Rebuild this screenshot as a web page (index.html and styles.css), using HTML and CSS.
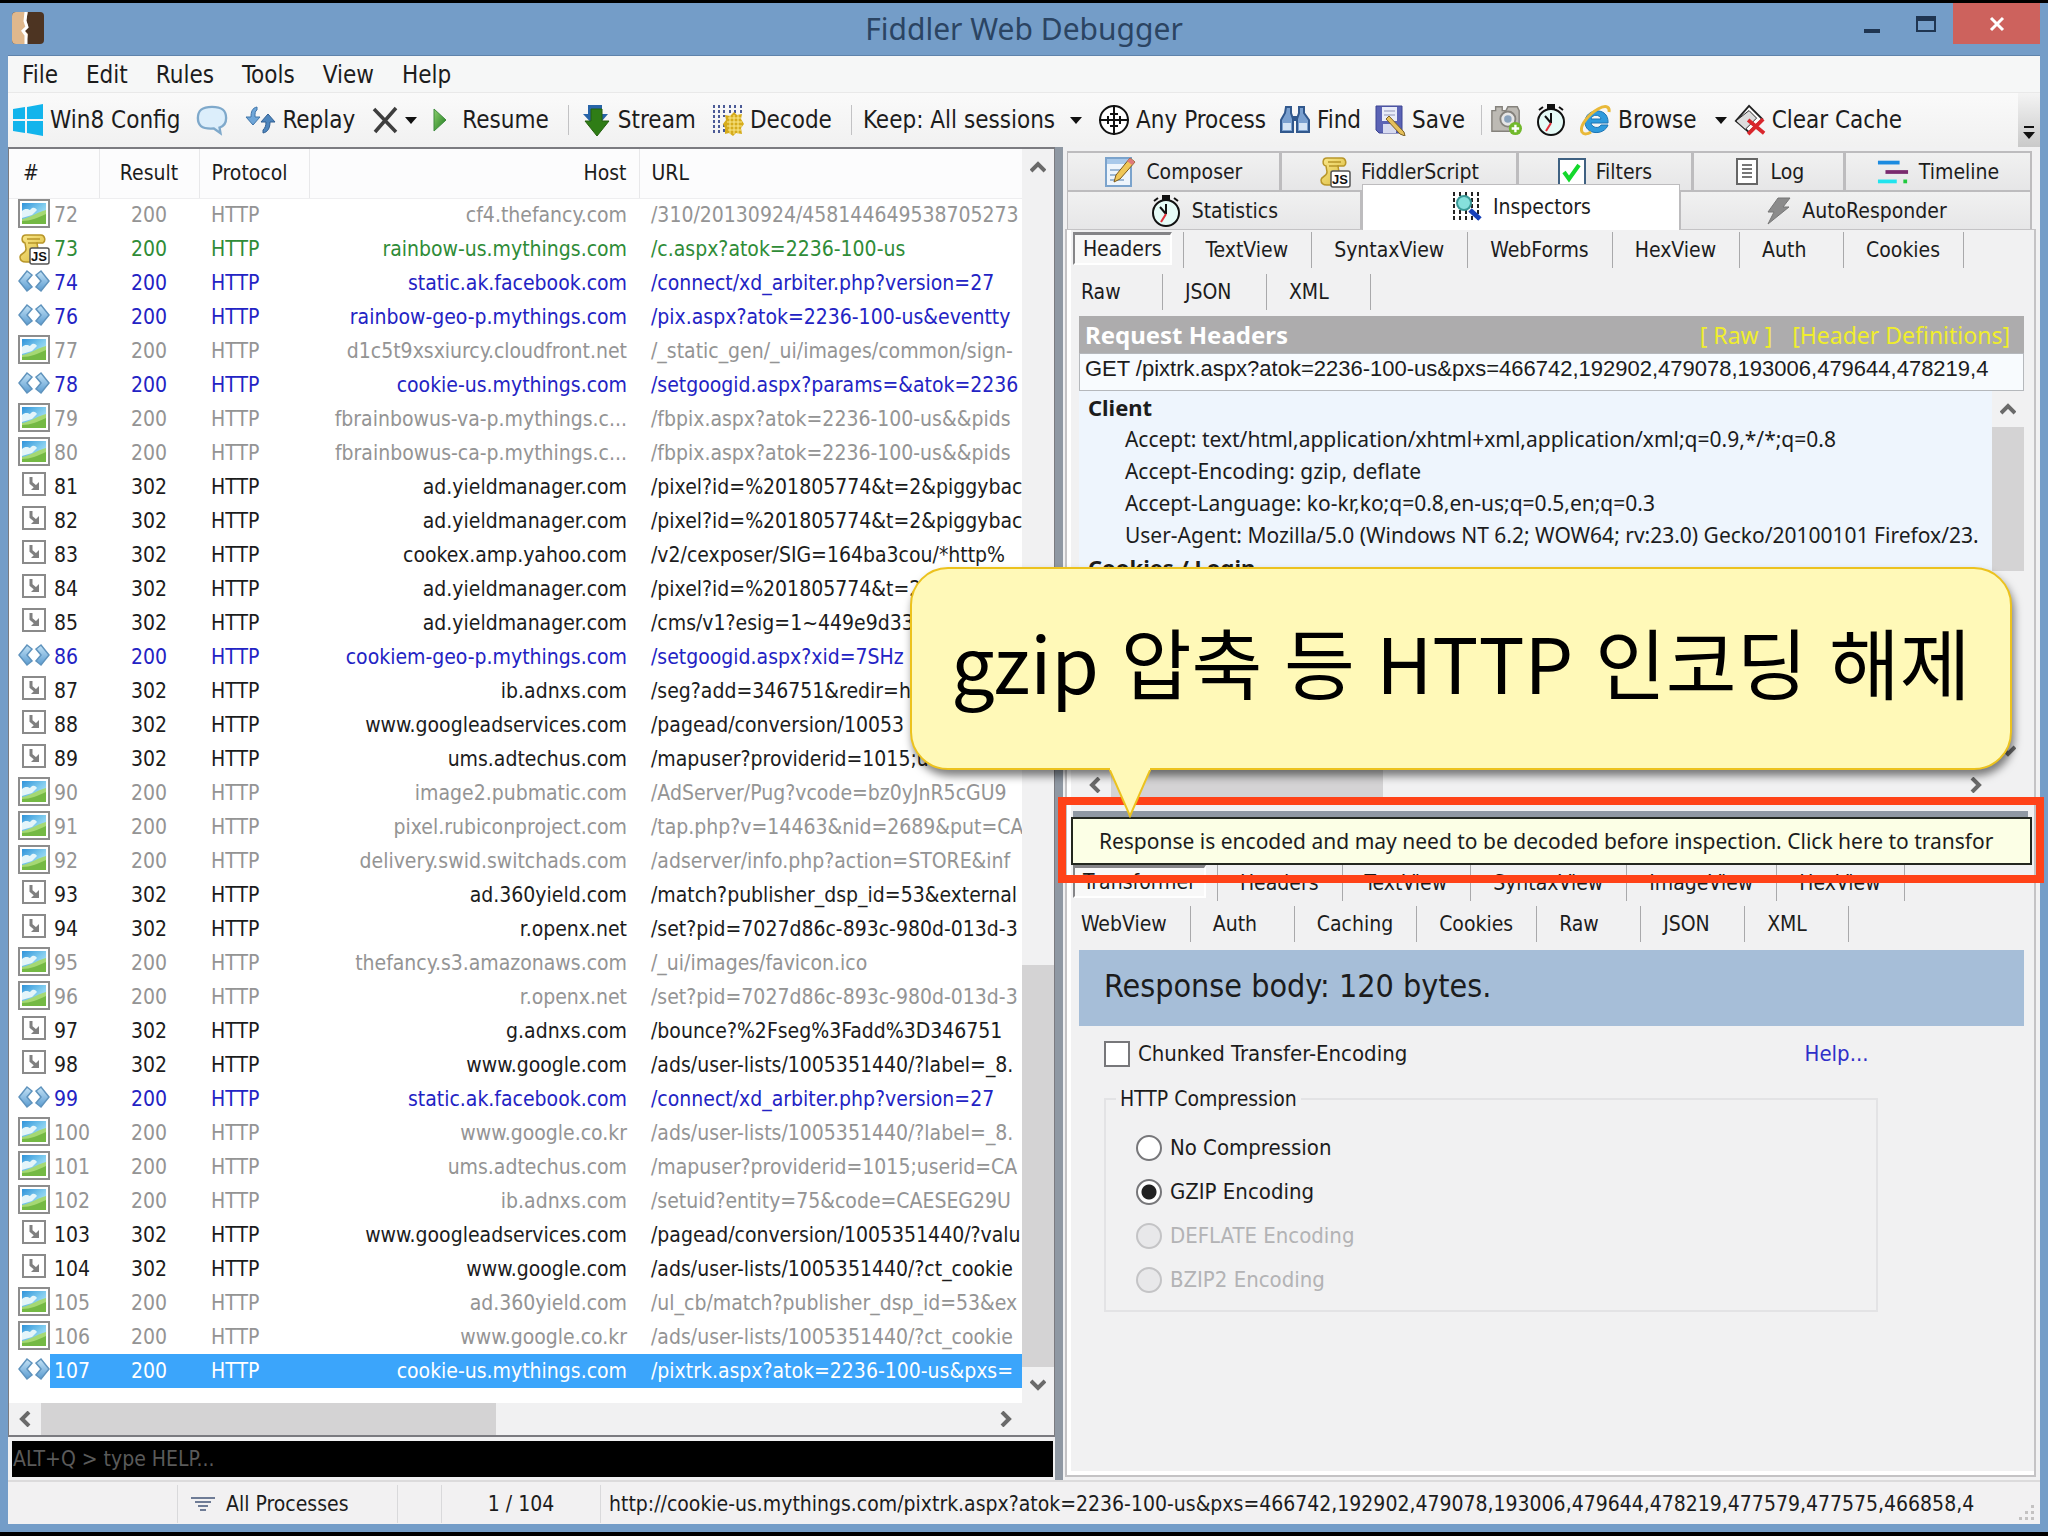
FILE: index.html
```html
<!DOCTYPE html>
<html lang="ko">
<head>
    <meta charset="UTF-8">
    <meta name="viewport" content="width=device-width, initial-scale=1.0">
    <title>Fiddler Web Debugger</title>
    <link rel="stylesheet" href="styles.css">
</head>
<body>
    <!-- Icon sprite -->
    <svg class="sprite" aria-hidden="true">
        <defs>
            <linearGradient id="sky" x1="0" y1="0" x2="1" y2="1">
                <stop offset="0" stop-color="#2f93da"/><stop offset=".5" stop-color="#7fcbee"/><stop offset="1" stop-color="#d2f0f5"/>
            </linearGradient>
            <linearGradient id="ice" x1="0" y1="0" x2="0" y2="1">
                <stop offset="0" stop-color="#c5e3f6"/><stop offset="1" stop-color="#5a9bd0"/>
            </linearGradient>
            <linearGradient id="leaf" x1="0" y1="0" x2="1" y2="1">
                <stop offset="0" stop-color="#8ccf6d"/><stop offset="1" stop-color="#1d7a1d"/>
            </linearGradient>
            <linearGradient id="paper" x1="0" y1="0" x2="1" y2="1">
                <stop offset="0" stop-color="#fbe98c"/><stop offset="1" stop-color="#d9b93c"/>
            </linearGradient>
        </defs>
        <symbol id="i-img" viewBox="0 0 32 32">
            <rect x="1" y="1" width="30" height="27" fill="#fff" stroke="#8d8d8d" stroke-width="2"/>
            <rect x="4" y="4" width="24" height="21" fill="url(#sky)"/>
            <path d="M4 12c3-3 6-2 8-1 3-4 6-2 7 0l-5 5-10 3z" fill="#e4f5fa"/>
            <path d="M4 20c8-1 13-6 24-9v14H4z" fill="#a5d873"/>
            <path d="M4 22c9 0 15-3 24-7v10H4z" fill="#74b944"/>
        </symbol>
        <symbol id="i-js" viewBox="0 0 32 32">
            <path d="M8 2C3 2 3 9 7 10l1 6c0 5-6 4-6 8 0 4 3 5 6 5h10l3-7-2-12h6c3-2 2-8-2-8z" fill="url(#paper)" stroke="#b8962a" stroke-width="1.5"/>
            <path d="M9 6h13M10 10h10" stroke="#b8962a" stroke-width="1.5"/>
            <rect x="12" y="15" width="19" height="16" rx="2" fill="#fff" stroke="#555" stroke-width="1.5"/>
        </symbol>
        <symbol id="i-xml" viewBox="0 0 32 32">
            <path d="M9 4l5 4-5 6 5 6-5 4-8-10z" fill="url(#ice)" stroke="#5f93bd" stroke-width="1.5"/>
            <path d="M23 4l-5 4 5 6-5 6 5 4 8-10z" fill="url(#ice)" stroke="#5f93bd" stroke-width="1.5"/>
        </symbol>
        <symbol id="i-redir" viewBox="0 0 32 32">
            <rect x="5" y="2" width="22" height="22" fill="#fff" stroke="#8a8a8a" stroke-width="2"/>
            <path d="M13 6v6l6 5" fill="none" stroke="#808080" stroke-width="3"/>
            <path d="M21 11v8h-8z" fill="#808080"/>
        </symbol>
        <symbol id="i-fiddler" viewBox="0 0 32 32">
            <rect width="32" height="32" rx="4" fill="#4d3422"/>
            <path d="M4 0h12l-2 8 2 6-4 4 4 4-2 10H4c-3 0-4-2-4-4V4c0-3 2-4 4-4z" fill="#e0b88d"/>
            <path d="M14 0l-1 9 2 6-4 4 3 4v9" fill="none" stroke="#fff" stroke-width="3"/>
        </symbol>
        <symbol id="i-win" viewBox="0 0 32 32">
            <path d="M1 5l12-2v12H1zM15 3l16-3v15H15zM1 17h12v12L1 27zM15 17h16v15l-16-3z" fill="#12b4ec"/>
        </symbol>
        <symbol id="i-chat" viewBox="0 0 34 32">
            <path d="M17 2c12 0 15 5 15 12 0 6-3 9-7 10l1 6-7-5c-14 1-17-4-17-11C2 6 6 2 17 2z" fill="#dceefb" stroke="#7fa9cb" stroke-width="2.5"/>
        </symbol>
        <symbol id="i-replay" viewBox="0 0 32 32">
            <path d="M13 3C8 4 7 8 7 13H2l7 8 7-8h-5c0-4 0-6 2-7z" fill="#6fa6d8" stroke="#3f74a8"/>
            <path d="M19 29c5-1 7-5 7-11h5l-7-8-7 8h5c0 4-1 6-3 8z" fill="#4f86bd" stroke="#305f92"/>
        </symbol>
        <symbol id="i-cross" viewBox="0 0 28 28">
            <path d="M3 3l22 23M25 2L4 26" fill="none" stroke="#3e3e3e" stroke-width="3.5"/>
        </symbol>
        <symbol id="i-play" viewBox="0 0 14 24">
            <path d="M1 1l12 11L1 23z" fill="url(#leaf)" stroke="#3d8b3d"/>
        </symbol>
        <symbol id="i-stream" viewBox="0 0 28 32">
            <path d="M6 1h14v9h6L14 24 1 10h5z" fill="#2764a8"/>
            <path d="M9 5h11v12h7L15 32 3 17h6z" fill="#2f7d16" stroke="#24600f"/>
        </symbol>
        <symbol id="i-decode" viewBox="0 0 32 32">
            <g fill="none" stroke="#4b5a96" stroke-width="2" stroke-dasharray="3 2">
                <path d="M2 1v30M7 1v30M12 1v12M18 1v8M23 1v8M29 1v8M12 20v10"/>
            </g>
            <path d="M22 8l3 3 5-1-1 5 3 5-3 4 1 6-6-1-3 3-4-3-4 1v-6l-2-4 3-4-1-5 5 1z" fill="#d6ac1c"/>
            <path d="M16 14h13M15 18h15M15 22h15M16 26h13M18 11v19M22 11v19M26 11v19" stroke="#fbe98c"/>
        </symbol>
        <symbol id="i-target" viewBox="0 0 32 32">
            <circle cx="16" cy="16" r="14" fill="#fff" stroke="#111" stroke-width="2"/>
            <path d="M16 1v30M1 16h30M10 12v8M22 12v8M12 10h8M12 22h8" stroke="#111" stroke-width="2"/>
        </symbol>
        <symbol id="i-find" viewBox="0 0 32 32">
            <path d="M7 3h5v6l2 6v13H2V16l4-7zM20 3h5v6l5 7v12H18V15l2-6z" fill="#7aa0cf" stroke="#31588d" stroke-width="2"/>
            <path d="M13 12h6v5h-6z" fill="#31588d"/>
            <path d="M4 19h8v7H4zM20 19h8v7h-8z" fill="#d4e4f5"/>
        </symbol>
        <symbol id="i-save" viewBox="0 0 32 32">
            <path d="M2 2h26v27H5l-3-3z" fill="#5b63b5" stroke="#3c4492"/>
            <rect x="8" y="3" width="15" height="14" fill="#e9ecf8"/>
            <path d="M10 7h11M10 11h11" stroke="#8e93b8"/>
            <rect x="9" y="20" width="13" height="9" fill="#d7daf0"/>
            <path d="M15 12l15 16 1 4-5-2-14-15z" fill="#e6c05a" stroke="#7b6024"/>
        </symbol>
        <symbol id="i-camera" viewBox="0 0 34 32">
            <path d="M2 6h4V2h7v4h4l2-4h10l2 4v22H2z" fill="#bdbab4" stroke="#85827c" stroke-width="1.5"/>
            <circle cx="19" cy="15" r="8" fill="#e6e6e6" stroke="#85827c" stroke-width="2"/>
            <circle cx="19" cy="15" r="4" fill="#8aa3bd"/>
            <circle cx="27" cy="25" r="7" fill="#72b92c"/>
            <path d="M27 21v8M23 25h8" stroke="#fff" stroke-width="2.5"/>
        </symbol>
        <symbol id="i-watch" viewBox="0 0 32 32">
            <path d="M13 1h6v4h-6zM4 6l4-3M28 6l-4-3" fill="#111" stroke="#111" stroke-width="2"/>
            <circle cx="16" cy="18" r="13" fill="#e6fbf7" stroke="#111" stroke-width="2"/>
            <path d="M16 19V9M16 19l-6-7" stroke="#111" stroke-width="2"/>
            <path d="M16 19l-5 8" stroke="#e0303a" stroke-width="2"/>
        </symbol>
        <symbol id="i-ie" viewBox="0 0 32 32">
            <path d="M28 19H11c1 5 8 6 10 2h7c-4 11-23 10-23-3 0-14 24-16 23 1zM11 15h10c-1-5-9-5-10 0z" fill="#2f9bdd" stroke="#1c74b4"/>
            <path d="M29 8c1-6-4-7-11-3C9 10-1 22 2 28c2 3 6 2 9 0" fill="none" stroke="#e9b93a" stroke-width="3"/>
        </symbol>
        <symbol id="i-eraser" viewBox="0 0 34 32">
            <path d="M16 1l14 14-14 14L2 17z" fill="#fff" stroke="#222" stroke-width="2"/>
            <path d="M2 17l14-11 8 8-12 12z" fill="#ddd" stroke="#222"/>
            <path d="M15 16l17 14M31 15L15 31" stroke="#d9262c" stroke-width="4"/>
        </symbol>
        <symbol id="i-compose" viewBox="0 0 32 32">
            <rect x="2" y="2" width="25" height="28" fill="#eef5fc" stroke="#7ba3cc" stroke-width="2"/>
            <path d="M3 3h23v5H3z" fill="#a9c9ea"/>
            <path d="M6 14h14M6 19h10M6 24h14" stroke="#9db8d4" stroke-width="2"/>
            <path d="M26 2l5 4-15 17-6 3 2-7z" fill="#f0c757" stroke="#7c5a1d"/>
            <path d="M26 2l5 4-3 3-5-4z" fill="#e07a7a"/>
        </symbol>
        <symbol id="i-check" viewBox="0 0 28 28">
            <rect x="1" y="1" width="26" height="26" fill="#fff" stroke="#3f6182" stroke-width="2"/>
            <path d="M6 14l5 7L21 7" fill="none" stroke="#14d82c" stroke-width="4"/>
        </symbol>
        <symbol id="i-log" viewBox="0 0 24 28">
            <rect x="2" y="1" width="20" height="25" fill="#fff" stroke="#666" stroke-width="2"/>
            <path d="M7 7h10M7 11h10M7 15h10M7 19h10" stroke="#777" stroke-width="2"/>
        </symbol>
        <symbol id="i-timeline" viewBox="0 0 34 28">
            <path d="M1 4h23" stroke="#1c8be0" stroke-width="4"/>
            <path d="M9 14h24" stroke="#7a2a6e" stroke-width="4"/>
            <path d="M1 24h20" stroke="#20e4ee" stroke-width="4"/>
            <path d="M28 24h4" stroke="#1ec83c" stroke-width="4"/>
        </symbol>
        <symbol id="i-inspect" viewBox="0 0 32 32">
            <g fill="none" stroke="#222" stroke-width="2" stroke-dasharray="4 2">
                <path d="M3 1v30M9 1v30M15 1v30M21 1v30M27 1v30"/>
            </g>
            <circle cx="13" cy="12" r="7" fill="#86e0dc" stroke="#3b9a98" stroke-width="2"/>
            <path d="M19 19l10 9" stroke="#1740b8" stroke-width="5"/>
        </symbol>
        <symbol id="i-bolt" viewBox="0 0 28 28">
            <path d="M14 1h12l-7 9h6L4 27l6-12H4z" fill="#8b8b8b" stroke="#777"/>
        </symbol>
        <symbol id="i-funnel" viewBox="0 0 26 16">
            <path d="M1 2h24M5 6h16M8 10h10M10 14h6" stroke="#6f7c96" stroke-width="2"/>
        </symbol>
        <symbol id="i-up" viewBox="0 0 16 12"><path d="M1 10l7-7 7 7" fill="none" stroke="#6a6a6a" stroke-width="4"/></symbol>
        <symbol id="i-down" viewBox="0 0 16 12"><path d="M1 2l7 7 7-7" fill="none" stroke="#6a6a6a" stroke-width="4"/></symbol>
        <symbol id="i-left" viewBox="0 0 12 16"><path d="M10 1L3 8l7 7" fill="none" stroke="#6a6a6a" stroke-width="4"/></symbol>
        <symbol id="i-right" viewBox="0 0 12 16"><path d="M2 1l7 7-7 7" fill="none" stroke="#6a6a6a" stroke-width="4"/></symbol>
    </svg>

    <div class="window">
        <header class="titlebar">
            <svg class="app-icon"><use href="#i-fiddler"/></svg>
            <h1 class="title">Fiddler Web Debugger</h1>
            <div class="window-buttons">
                <button class="win-btn" aria-label="Minimize"><span class="glyph-min"></span></button>
                <button class="win-btn" aria-label="Maximize"><span class="glyph-max"></span></button>
                <button class="win-btn win-close" aria-label="Close">
                    <svg width="16" height="16" viewBox="0 0 16 16"><path d="M2 2l12 12M14 2L2 14" stroke="#fff" stroke-width="3"/></svg>
                </button>
            </div>
        </header>

        <div class="client">
            <nav class="menubar">
                <button>File</button>
                <button>Edit</button>
                <button>Rules</button>
                <button>Tools</button>
                <button>View</button>
                <button>Help</button>
            </nav>

            <div class="toolbar">
                <button class="tool"><svg class="icon"><use href="#i-win"/></svg>Win8 Config</button>
                <button class="tool" aria-label="Comment"><svg class="icon"><use href="#i-chat"/></svg></button>
                <button class="tool"><svg class="icon"><use href="#i-replay"/></svg>Replay</button>
                <button class="tool" aria-label="Remove"><svg class="icon icon-s"><use href="#i-cross"/></svg><span class="caret"></span></button>
                <button class="tool tool-wide"><svg class="icon icon-play"><use href="#i-play"/></svg>Resume</button>
                <span class="sep"></span>
                <button class="tool"><svg class="icon"><use href="#i-stream"/></svg>Stream</button>
                <button class="tool"><svg class="icon"><use href="#i-decode"/></svg>Decode</button>
                <span class="sep"></span>
                <button class="tool tool-wide">Keep: All sessions<span class="caret"></span></button>
                <div class="tool-group">
                    <button class="tool"><svg class="icon"><use href="#i-target"/></svg>Any Process</button>
                    <button class="tool"><svg class="icon"><use href="#i-find"/></svg>Find</button>
                    <button class="tool"><svg class="icon"><use href="#i-save"/></svg>Save</button>
                    <span class="sep"></span>
                    <button class="tool" aria-label="Screenshot"><svg class="icon"><use href="#i-camera"/></svg></button>
                    <button class="tool" aria-label="Timer"><svg class="icon"><use href="#i-watch"/></svg></button>
                    <button class="tool tool-browse"><svg class="icon"><use href="#i-ie"/></svg>Browse<span class="caret"></span></button>
                    <button class="tool"><svg class="icon"><use href="#i-eraser"/></svg>Clear Cache</button>
                </div>
                <button class="overflow" aria-label="More"><span class="overflow-line"></span><span class="caret"></span></button>
            </div>

            <main class="panes">
                <section class="left">
                    <div class="sessions">
                        <div class="grid-wrap">
                            <table class="grid">
                                <colgroup>
                                    <col class="c-icon"><col class="c-num"><col class="c-result"><col class="c-proto"><col class="c-host"><col>
                                </colgroup>
                                <thead>
                                    <tr>
                                        <th colspan="2" class="h-num">#</th>
                                        <th class="result">Result</th>
                                        <th>Protocol</th>
                                        <th class="host">Host</th>
                                        <th>URL</th>
                                    </tr>
                                </thead>
                                <tbody id="sessions"></tbody>
                            </table>
                        </div>
                        <div class="vscroll">
                            <button aria-label="Scroll up"><svg class="arrow-v"><use href="#i-up"/></svg></button>
                            <div class="track track-end"><div class="thumb"></div></div>
                            <button aria-label="Scroll down"><svg class="arrow-v"><use href="#i-down"/></svg></button>
                        </div>
                        <div class="hscroll">
                            <button aria-label="Scroll left"><svg class="arrow-h"><use href="#i-left"/></svg></button>
                            <div class="track"><div class="thumb"></div></div>
                            <button aria-label="Scroll right"><svg class="arrow-h"><use href="#i-right"/></svg></button>
                        </div>
                    </div>
                    <input class="quickexec" type="text" aria-label="QuickExec" placeholder="ALT+Q &gt; type HELP...">
                </section>

                <div class="splitter"></div>

                <section class="right">
                    <div class="tabs tabs-top">
                        <button class="tab"><svg class="icon"><use href="#i-compose"/></svg>Composer</button>
                        <button class="tab"><svg class="icon" viewBox="0 0 32 32"><use href="#i-js"/><text x="21" y="28" text-anchor="middle" class="js-mark">JS</text></svg>FiddlerScript</button>
                        <button class="tab"><svg class="icon icon-s"><use href="#i-check"/></svg>Filters</button>
                        <button class="tab"><svg class="icon icon-s"><use href="#i-log"/></svg>Log</button>
                        <button class="tab"><svg class="icon"><use href="#i-timeline"/></svg>Timeline</button>
                    </div>
                    <div class="tabs tabs-bottom">
                        <button class="tab"><svg class="icon"><use href="#i-watch"/></svg>Statistics</button>
                        <button class="tab active"><svg class="icon"><use href="#i-inspect"/></svg>Inspectors</button>
                        <button class="tab"><svg class="icon icon-s"><use href="#i-bolt"/></svg>AutoResponder</button>
                    </div>

                    <div class="page">
                        <section class="request">
                            <div class="subtabs">
                                <button class="active">Headers</button><button>TextView</button><button>SyntaxView</button><button>WebForms</button><button>HexView</button><button>Auth</button><button>Cookies</button>
                            </div>
                            <div class="subtabs">
                                <button>Raw</button><button>JSON</button><button>XML</button>
                            </div>
                            <div class="headers-view">
                                <div class="headers-bar">
                                    <h2>Request Headers</h2>
                                    <a href="#">[ Raw ]</a>
                                    <a href="#">[Header Definitions]</a>
                                </div>
                                <input class="request-line" type="text" readonly aria-label="Request line" value="GET /pixtrk.aspx?atok=2236-100-us&amp;pxs=466742,192902,479078,193006,479644,478219,4">
                                <div class="tree-box">
                                    <div class="tree">
                                        <h3>Client</h3>
                                        <p>Accept: text/html,application/xhtml+xml,application/xml;q=0.9,*/*;q=0.8</p>
                                        <p>Accept-Encoding: gzip, deflate</p>
                                        <p>Accept-Language: ko-kr,ko;q=0.8,en-us;q=0.5,en;q=0.3</p>
                                        <p>User-Agent: Mozilla/5.0 (Windows NT 6.2; WOW64; rv:23.0) Gecko/20100101 Firefox/23.</p>
                                        <h3>Cookies / Login</h3>
                                    </div>
                                    <div class="vscroll">
                                        <button aria-label="Scroll up"><svg class="arrow-v"><use href="#i-up"/></svg></button>
                                        <div class="track"><div class="thumb"></div></div>
                                        <button aria-label="Scroll down"><svg class="arrow-v"><use href="#i-down"/></svg></button>
                                    </div>
                                    <div class="hscroll">
                                        <button aria-label="Scroll left"><svg class="arrow-h"><use href="#i-left"/></svg></button>
                                        <div class="track"><div class="thumb"></div></div>
                                        <button aria-label="Scroll right"><svg class="arrow-h"><use href="#i-right"/></svg></button>
                                    </div>
                                </div>
                            </div>
                        </section>

                        <div class="hsplitter"></div>

                        <section class="response">
                            <div class="notice-wrap">
                                <button class="notice">Response is encoded and may need to be decoded before inspection. Click here to transfor</button>
                                <div class="highlight"></div>
                                <div class="callout">
                                    gzip 압축 등 HTTP 인코딩 해제
                                    <svg class="callout-tail" viewBox="0 0 42 50">
                                        <path d="M0 0L21 48L42 0" fill="#fff9b8" stroke="#ecc21e" stroke-width="2"/>
                                        <path d="M1 0h40" stroke="#fff9b8" stroke-width="4"/>
                                    </svg>
                                </div>
                            </div>
                            <div class="subtabs">
                                <button class="active">Transformer</button><button>Headers</button><button>TextView</button><button>SyntaxView</button><button>ImageView</button><button>HexView</button>
                            </div>
                            <div class="subtabs">
                                <button>WebView</button><button>Auth</button><button>Caching</button><button>Cookies</button><button>Raw</button><button>JSON</button><button>XML</button>
                            </div>
                            <div class="body-size">Response body: 120 bytes.</div>
                            <form class="transformer">
                                <div class="chunked-row">
                                    <label class="option"><input type="checkbox">Chunked Transfer-Encoding</label>
                                    <a href="#">Help...</a>
                                </div>
                                <fieldset>
                                    <legend>HTTP Compression</legend>
                                    <label class="option"><input type="radio" name="compression">No Compression</label>
                                    <label class="option"><input type="radio" name="compression" checked>GZIP Encoding</label>
                                    <label class="option disabled"><input type="radio" name="compression" disabled>DEFLATE Encoding</label>
                                    <label class="option disabled"><input type="radio" name="compression" disabled>BZIP2 Encoding</label>
                                </fieldset>
                            </form>
                        </section>
                    </div>
                </section>
            </main>

            <footer class="statusbar">
                <span class="st-capture"></span>
                <span class="st-process"><svg class="funnel"><use href="#i-funnel"/></svg>All Processes</span>
                <span class="st-break"></span>
                <span class="st-count">1 / 104</span>
                <span class="st-url">http://cookie-us.mythings.com/pixtrk.aspx?atok=2236-100-us&amp;pxs=466742,192902,479078,193006,479644,478219,477579,477575,466858,4</span>
                <svg class="grip" viewBox="0 0 18 18"><path d="M13 1h3v3h-3zM7 7h3v3H7zM13 7h3v3h-3zM1 13h3v3H1zM7 13h3v3H7zM13 13h3v3h-3z" fill="#c4c2c2"/></svg>
            </footer>
        </div>
    </div>

    <script>
        // [id, result, host, url, kind]
        const sessions = [
            [72, 200, "cf4.thefancy.com", "/310/20130924/458144649538705273", "img"],
            [73, 200, "rainbow-us.mythings.com", "/c.aspx?atok=2236-100-us", "js"],
            [74, 200, "static.ak.facebook.com", "/connect/xd_arbiter.php?version=27", "xml"],
            [76, 200, "rainbow-geo-p.mythings.com", "/pix.aspx?atok=2236-100-us&eventty", "xml"],
            [77, 200, "d1c5t9xsxiurcy.cloudfront.net", "/_static_gen/_ui/images/common/sign-", "img"],
            [78, 200, "cookie-us.mythings.com", "/setgoogid.aspx?params=&atok=2236", "xml"],
            [79, 200, "fbrainbowus-va-p.mythings.c...", "/fbpix.aspx?atok=2236-100-us&&pids", "img"],
            [80, 200, "fbrainbowus-ca-p.mythings.c...", "/fbpix.aspx?atok=2236-100-us&&pids", "img"],
            [81, 302, "ad.yieldmanager.com", "/pixel?id=%201805774&t=2&piggybac", "redir"],
            [82, 302, "ad.yieldmanager.com", "/pixel?id=%201805774&t=2&piggybac", "redir"],
            [83, 302, "cookex.amp.yahoo.com", "/v2/cexposer/SIG=164ba3cou/*http%", "redir"],
            [84, 302, "ad.yieldmanager.com", "/pixel?id=%201805774&t=2&piggybac", "redir"],
            [85, 302, "ad.yieldmanager.com", "/cms/v1?esig=1~449e9d33", "redir"],
            [86, 200, "cookiem-geo-p.mythings.com", "/setgoogid.aspx?xid=7SHz", "xml"],
            [87, 302, "ib.adnxs.com", "/seg?add=346751&redir=h", "redir"],
            [88, 302, "www.googleadservices.com", "/pagead/conversion/10053", "redir"],
            [89, 302, "ums.adtechus.com", "/mapuser?providerid=1015;u", "redir"],
            [90, 200, "image2.pubmatic.com", "/AdServer/Pug?vcode=bz0yJnR5cGU9", "img"],
            [91, 200, "pixel.rubiconproject.com", "/tap.php?v=14463&nid=2689&put=CA", "img"],
            [92, 200, "delivery.swid.switchads.com", "/adserver/info.php?action=STORE&inf", "img"],
            [93, 302, "ad.360yield.com", "/match?publisher_dsp_id=53&external", "redir"],
            [94, 302, "r.openx.net", "/set?pid=7027d86c-893c-980d-013d-3", "redir"],
            [95, 200, "thefancy.s3.amazonaws.com", "/_ui/images/favicon.ico", "img"],
            [96, 200, "r.openx.net", "/set?pid=7027d86c-893c-980d-013d-3", "img"],
            [97, 302, "g.adnxs.com", "/bounce?%2Fseg%3Fadd%3D346751", "redir"],
            [98, 302, "www.google.com", "/ads/user-lists/1005351440/?label=_8.", "redir"],
            [99, 200, "static.ak.facebook.com", "/connect/xd_arbiter.php?version=27", "xml"],
            [100, 200, "www.google.co.kr", "/ads/user-lists/1005351440/?label=_8.", "img"],
            [101, 200, "ums.adtechus.com", "/mapuser?providerid=1015;userid=CA", "img"],
            [102, 200, "ib.adnxs.com", "/setuid?entity=75&code=CAESEG29U", "img"],
            [103, 302, "www.googleadservices.com", "/pagead/conversion/1005351440/?valu", "redir"],
            [104, 302, "www.google.com", "/ads/user-lists/1005351440/?ct_cookie", "redir"],
            [105, 200, "ad.360yield.com", "/ul_cb/match?publisher_dsp_id=53&ex", "img"],
            [106, 200, "www.google.co.kr", "/ads/user-lists/1005351440/?ct_cookie", "img"],
            [107, 200, "cookie-us.mythings.com", "/pixtrk.aspx?atok=2236-100-us&pxs=", "xml"]
        ];
        const selected = 107;
        const body = document.getElementById('sessions');

        sessions.forEach(([id, result, host, url, kind]) => {
            const row = document.createElement('tr');
            const mark = kind === 'js' ? '<text x="21" y="28" text-anchor="middle" class="js-mark">JS</text>' : '';
            row.className = 'row-' + kind + (id === selected ? ' selected' : '');
            row.innerHTML = `<td class="kind"><svg class="row-icon" viewBox="0 0 32 32"><use href="#i-${kind}"/>${mark}</svg></td>`;
            [['num', id], ['result', result], ['proto', 'HTTP'], ['host', host], ['url', url]].forEach(([name, value]) => {
                const cell = document.createElement('td');
                cell.className = name;
                cell.textContent = value;
                row.appendChild(cell);
            });
            body.appendChild(row);
        });
    </script>
</body>
</html>
```
FILE: styles.css
```css
* {
    box-sizing: border-box;
}

body {
    margin: 0;
    padding: 3px 0 4px;
    min-height: 100vh;
    display: flex;
    background: #000;
    color: #1c1c1c;
    font-family: "DejaVu Sans Condensed", "Noto Sans", sans-serif;
    font-size: 21px;
}

button, input {
    font: inherit;
    color: inherit;
}

button {
    border: none;
    background: none;
    padding: 0;
    white-space: nowrap;
}

h1, h2, h3, p {
    margin: 0;
}

a {
    text-decoration: none;
}

.sprite {
    position: absolute;
    width: 0;
    height: 0;
}

.js-mark {
    font: bold 13px "Liberation Sans", sans-serif;
    fill: #111;
}

/* Window frame */
.window {
    flex: 1;
    min-width: 0;
    display: flex;
    flex-direction: column;
    padding: 0 8px 8px;
    background: #749dc8;
}

.titlebar {
    display: grid;
    grid-template-columns: 1fr auto 1fr;
    height: 53px;
    border-bottom: 1px solid #5f83ab;
}

.app-icon {
    width: 32px;
    height: 32px;
    margin: 9px 4px;
}

.title {
    align-self: center;
    color: #2b4462;
    font-family: "Noto Sans", sans-serif;
    font-size: 30px;
    font-weight: normal;
    line-height: 40px;
}

.window-buttons {
    display: flex;
    justify-content: flex-end;
}

.win-btn {
    display: flex;
    align-items: center;
    justify-content: center;
    width: 54px;
    height: 41px;
}

.win-close {
    width: 87px;
    background: #cd625d;
}

.glyph-min {
    width: 16px;
    height: 4px;
    margin-top: 14px;
    background: #1f3551;
}

.glyph-max {
    width: 20px;
    height: 16px;
    border: 2px solid #1f3551;
    border-top-width: 5px;
}

.client {
    flex: 1;
    display: flex;
    flex-direction: column;
    min-width: 0;
    background: #f1f1f2;
}

/* Menu and toolbar */
.menubar {
    display: flex;
    gap: 28px;
    height: 37px;
    padding: 2px 0 0 14px;
    background: #f6f7f7;
    border-bottom: 1px solid #e9e9e9;
    font-size: 24px;
}

.toolbar {
    display: flex;
    align-items: center;
    gap: 16px;
    height: 54px;
    padding-left: 4px;
    background: linear-gradient(#fafafa, #f1f1f1);
    font-size: 24px;
}

.tool-group {
    display: flex;
    align-items: center;
    gap: 13px;
}

.tool {
    display: flex;
    align-items: center;
    gap: 6px;
    height: 40px;
}

.tool-wide {
    gap: 15px;
}

.tool-browse .caret {
    margin: 0 -6px 0 12px;
}

.icon {
    flex: none;
    width: 32px;
    height: 32px;
}

.icon-s {
    width: 28px;
    height: 28px;
}

.icon-play {
    width: 14px;
    height: 24px;
}

.caret {
    border: 6px solid transparent;
    border-top: 7px solid #111;
    border-bottom: 0;
}

.sep {
    width: 1px;
    height: 30px;
    margin: 0 -5px 0 3px;
    background: #c2c2c4;
}

.overflow {
    display: flex;
    flex-direction: column;
    align-items: center;
    justify-content: flex-end;
    gap: 4px;
    width: 22px;
    height: 54px;
    margin-left: auto;
    padding-bottom: 8px;
    background: linear-gradient(#f4f4f4, #c9c9c9);
}

.overflow-line {
    width: 10px;
    height: 2px;
    background: #111;
}

/* Main split */
.panes {
    flex: 1;
    display: grid;
    grid-template-columns: minmax(0, 15fr) 8px minmax(0, 14fr);
    min-height: 0;
}

.left {
    display: flex;
    flex-direction: column;
}

.splitter {
    background: #8f98a3;
}

.sessions {
    flex: 1;
    display: grid;
    grid-template: minmax(0, 1fr) 32px / minmax(0, 1fr) 32px;
    background: #f1f1f2;
    border: 1px solid #7b7b80;
    border-top-width: 2px;
    border-bottom-width: 2px;
}

.grid-wrap {
    background: #fff;
    overflow: hidden;
}

.grid {
    width: 100%;
    table-layout: fixed;
    border-collapse: collapse;
}

.c-icon { width: 41px; }
.c-num { width: 49px; }
.c-result { width: 100px; }
.c-proto { width: 110px; }
.c-host { width: 330px; }

.grid th {
    height: 49px;
    padding: 0 12px;
    background: #fcfcfd;
    border-right: 1px solid #e8e8ea;
    border-bottom: 1px solid #eeeef0;
    font-weight: normal;
    text-align: left;
}

.grid th:last-child {
    border-right: none;
}

.grid .h-num {
    padding-left: 14px;
}

.grid td {
    height: 34px;
    padding: 0 12px;
    line-height: 30px;
    white-space: nowrap;
    overflow: hidden;
}

.grid .kind {
    padding: 0 0 0 9px;
}

.grid .num {
    padding: 0 0 0 4px;
}

.grid .result {
    padding: 0;
    text-align: center;
}

.grid .host {
    text-align: right;
}

.grid .url {
    padding-right: 0;
}

.row-icon {
    display: block;
    width: 32px;
    height: 32px;
}

.row-img { color: #949494; }
.row-js { color: #2f8c37; }
.row-xml { color: #2323c4; }
.row-redir { color: #1c1c1c; }

.selected td:not(.kind) {
    background: #3ba5fb;
    color: #fff;
}

/* Scrollbars */
.vscroll, .hscroll {
    display: flex;
    background: #f1f1f2;
}

.vscroll {
    flex-direction: column;
}

.vscroll button, .hscroll button {
    flex: none;
    display: flex;
    align-items: center;
    justify-content: center;
    width: 32px;
    height: 36px;
}

.hscroll button {
    height: 32px;
}

.arrow-v {
    width: 16px;
    height: 12px;
}

.arrow-h {
    width: 12px;
    height: 16px;
}

.track {
    flex: 1;
    display: flex;
    min-height: 0;
}

.vscroll .track {
    flex-direction: column;
}

.track-end {
    justify-content: flex-end;
}

.thumb {
    background: #d4d3d4;
}

.vscroll .thumb {
    height: 34%;
}

.hscroll .thumb {
    width: 48%;
}

.quickexec {
    height: 36px;
    margin: 4px 2px 3px 4px;
    padding: 0;
    border: 1px solid #000;
    background: #000;
    color: #ccc;
}

.quickexec::placeholder {
    color: #5a5a5a;
    opacity: 1;
}

/* Right pane tabs */
.right {
    display: flex;
    flex-direction: column;
    padding: 4px 4px 3px 2px;
}

.tabs {
    display: grid;
    height: 39px;
    padding: 0 4px 0 2px;
}

.tabs-top {
    grid-template-columns: 214fr 237fr 175fr 152fr 187fr;
}

.tabs-bottom {
    grid-template-columns: 295fr 318fr 352fr;
}

.tab {
    display: flex;
    align-items: center;
    justify-content: center;
    gap: 10px;
    border: 1px solid #bdbcbe;
    border-width: 2px 2px 0 1px;
    background: linear-gradient(#f1f1f1, #e6e6e7);
}

.tab.active {
    position: relative;
    height: 46px;
    margin: -6px 0 0;
    padding-bottom: 2px;
    border-width: 1px;
    border-bottom: none;
    background: #fff;
}

.page {
    flex: 1;
    display: grid;
    grid-template-rows: minmax(0, 15fr) 6px minmax(0, 17fr);
    padding: 0 6px;
    background: #f1f1f2;
    border: 2px solid #c4c3c5;
    border-top-width: 1px;
    box-shadow: inset 4px 0 #fff, inset 0 -4px #fff;
}

.hsplitter {
    background: #8f98a3;
}

.request {
    display: flex;
    flex-direction: column;
    padding: 2px 0 12px;
}

.subtabs {
    display: flex;
    height: 42px;
}

.subtabs button {
    height: 36px;
    min-width: 104px;
    padding: 0 23px 0 22px;
    border-right: 1px solid #a9a9ab;
    text-align: left;
}

.subtabs button:first-child {
    min-width: 90px;
    padding-left: 8px;
}

.subtabs button.active {
    height: 33px;
    margin-right: 11px;
    padding: 0 8px;
    border-top: 3px solid #858588;
    border-left: 2px solid #858588;
    border-right: 2px solid #fff;
    border-bottom: 2px solid #fff;
    background: #f8f8f8;
}

.subtabs button.active + button {
    border-left: 1px solid #a9a9ab;
}

.headers-view {
    flex: 1;
    display: flex;
    flex-direction: column;
    min-height: 0;
    margin: 0 4px 0 6px;
}

.headers-bar {
    display: flex;
    align-items: center;
    gap: 20px;
    height: 37px;
    padding: 0 14px 0 6px;
    background: #adacad;
    color: #fff;
    font-family: "Noto Sans", sans-serif;
    font-size: 23px;
    line-height: 30px;
}

.headers-bar h2 {
    margin-right: auto;
    font-size: 24px;
}

.headers-bar a {
    color: #f0ee2c;
}

.request-line {
    height: 38px;
    padding: 0 5px 6px;
    border: 1px solid #b5b8bc;
    background: #f8fbfe;
    font-family: "Liberation Sans", sans-serif;
    font-size: 22px;
}

.tree-box {
    flex: 1;
    display: grid;
    grid-template: minmax(0, 1fr) 30px / minmax(0, 1fr) 32px;
    min-height: 0;
}

.tree {
    padding: 0 9px;
    background: #eef5fd;
    font-family: "Noto Sans", sans-serif;
    font-size: 21px;
    line-height: 32px;
    white-space: nowrap;
    overflow: hidden;
}

.tree h3 {
    font-size: 22px;
}

.tree p {
    padding-left: 37px;
}

.tree-box .vscroll .thumb {
    height: 47%;
}

.tree-box .hscroll .thumb {
    width: 32%;
}

/* Encoded-response notice with its annotation */
.notice-wrap {
    position: relative;
    margin: 0 -4px 0 -2px;
}

.notice {
    width: 100%;
    height: 48px;
    padding: 0 26px;
    border: 2px solid #23271f;
    background: #fcffe6;
    font-family: "Noto Sans", sans-serif;
    font-size: 21px;
    text-align: left;
    overflow: hidden;
}

.highlight {
    position: absolute;
    inset: -20px -12px -18px -13px;
    border: 8px solid #ff4218;
    z-index: 1;
}

.callout {
    position: absolute;
    right: 20px;
    bottom: 95px;
    z-index: 2;
    width: 1102px;
    height: 203px;
    border: 2px solid #ecc21e;
    border-radius: 38px;
    background: #fff9b8;
    box-shadow: 2px 6px 8px rgba(0, 0, 0, 0.5);
    color: #000;
    font-family: "Noto Sans CJK KR", sans-serif;
    font-size: 77px;
    line-height: 184px;
    text-align: center;
    white-space: nowrap;
}

.callout-tail {
    position: absolute;
    top: 100%;
    left: 197px;
    width: 42px;
    height: 50px;
}

/* Response side */
.response {
    display: flex;
    flex-direction: column;
    min-height: 0;
}

.response .subtabs {
    height: 40px;
}

.response .subtabs:nth-child(2) {
    height: 41px;
}

.body-size {
    flex: none;
    height: 76px;
    margin: 4px 4px 0 6px;
    padding-left: 25px;
    background: #a6bed8;
    font-size: 32px;
    line-height: 72px;
}

.transformer {
    width: 81%;
    margin: 10px 0 0 31px;
}

.chunked-row {
    display: flex;
    justify-content: space-between;
    align-items: center;
    height: 36px;
    padding-right: 9px;
    font-size: 22px;
}

.chunked-row a {
    color: #2f2fc8;
}

.option {
    display: flex;
    align-items: center;
    gap: 8px;
    height: 44px;
    font-size: 22px;
}

.option input {
    appearance: none;
    width: 26px;
    height: 26px;
    margin: 0;
    border: 2px solid #77777a;
    background: #fff;
}

.option input[type="radio"] {
    border-radius: 50%;
}

.option input[type="radio"]:checked {
    background: radial-gradient(circle, #222 0 7px, #fff 8px);
}

.option input:disabled {
    border-color: #c4c4c6;
    background: #e8e8ea;
}

.option.disabled {
    color: #b3b3b5;
}

fieldset {
    margin: 12px 0 0;
    padding: 12px 30px 8px;
    border: 2px solid #e3e3e5;
}

legend {
    margin-left: -20px;
    padding: 0 4px;
    line-height: 30px;
}

/* Status bar */
.statusbar {
    display: flex;
    align-items: center;
    height: 44px;
    padding-top: 2px;
    background: #f2f1f2;
    border-top: 2px solid #dcdbdc;
}

.statusbar span {
    display: flex;
    align-items: center;
    height: 38px;
    white-space: nowrap;
    border-right: 1px solid #d9d9db;
}

.st-capture {
    width: 170px;
}

.st-process {
    gap: 10px;
    width: 220px;
    padding-left: 12px;
}

.funnel {
    width: 26px;
    height: 16px;
}

.st-break {
    width: 44px;
}

.st-count {
    justify-content: center;
    width: 159px;
}

.statusbar .st-url {
    flex: 1;
    min-width: 0;
    padding-left: 8px;
    border-right: none;
    overflow: hidden;
}

.grip {
    align-self: flex-end;
    width: 18px;
    height: 18px;
    margin: 0 4px 2px;
}
```
